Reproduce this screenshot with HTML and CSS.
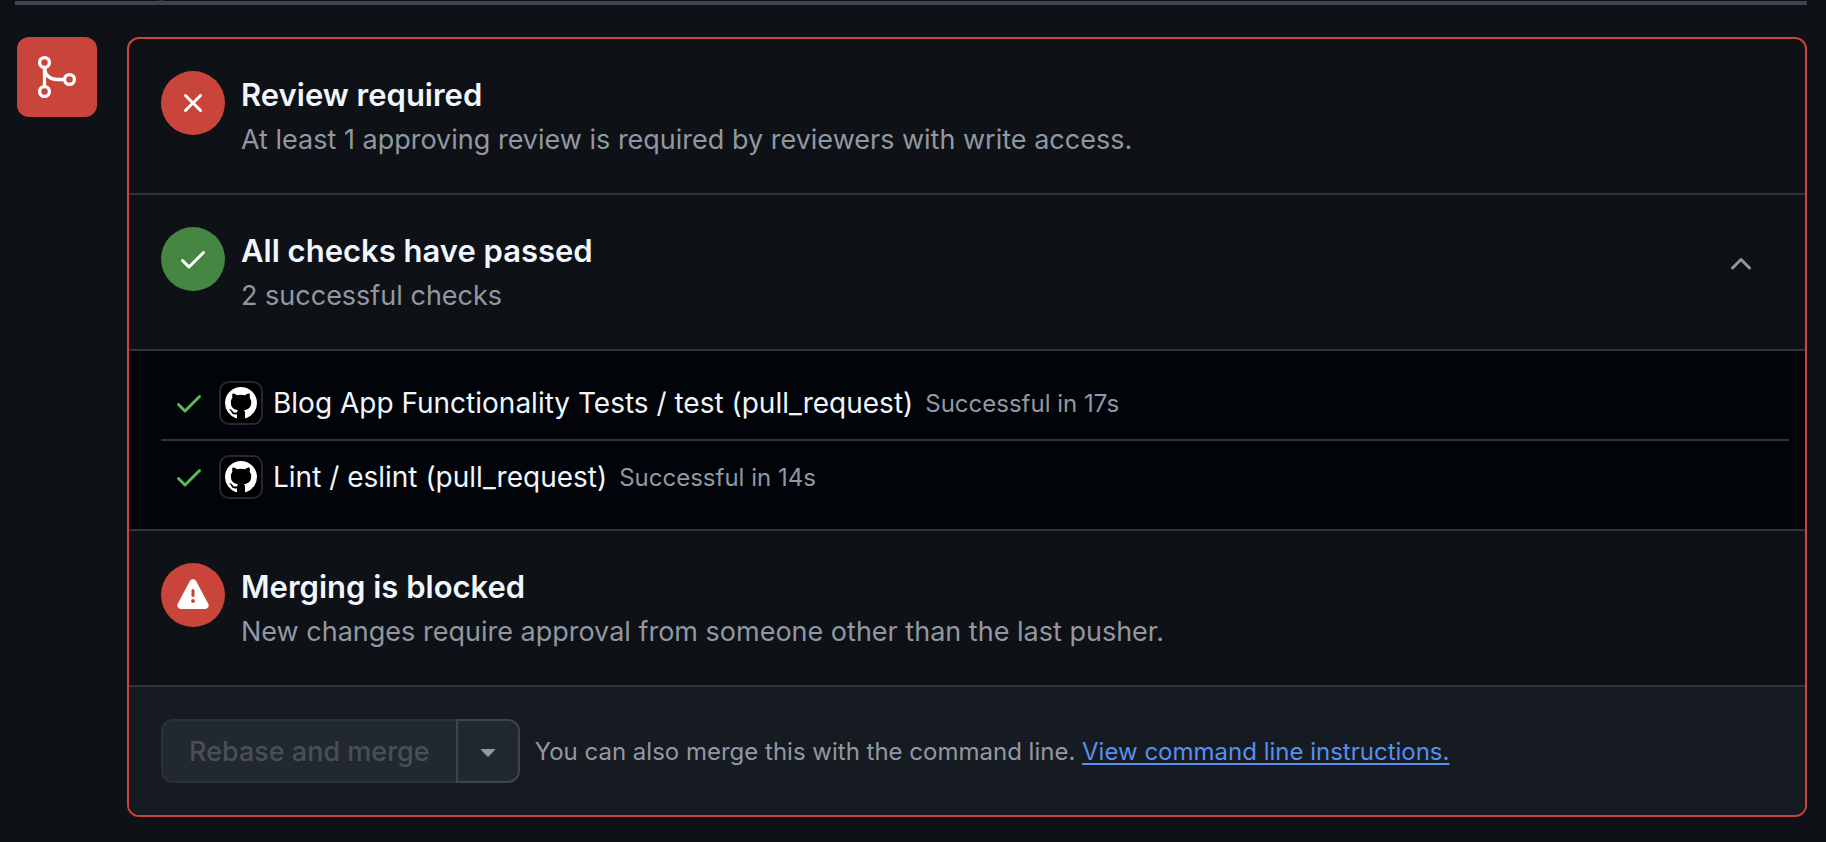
FILE: index.html
```html
<!DOCTYPE html>
<html lang="en">
<head>
<meta charset="utf-8">
<title>Merge status</title>
<link rel="stylesheet" href="styles.css">
</head>
<body>
<svg class="sprite" aria-hidden="true">
  <symbol id="check" viewBox="0 0 16 16"><path d="M13.78 4.22a.75.75 0 0 1 0 1.06l-7.25 7.25a.75.75 0 0 1-1.06 0L2.22 9.28a.751.751 0 0 1 .018-1.042.751.751 0 0 1 1.042-.018L6 10.94l6.72-6.72a.75.75 0 0 1 1.06 0Z"/></symbol>
  <symbol id="mark" viewBox="0 0 16 16"><path d="M8 0c4.42 0 8 3.58 8 8a8.013 8.013 0 0 1-5.45 7.59c-.4.08-.55-.17-.55-.38 0-.27.01-1.13.01-2.2 0-.75-.25-1.23-.54-1.48 1.78-.2 3.65-.88 3.65-3.95 0-.88-.31-1.59-.82-2.15.08-.2.36-1.02-.08-2.12 0 0-.67-.22-2.2.82-.64-.18-1.32-.27-2-.27-.68 0-1.36.09-2 .27-1.53-1.03-2.2-.82-2.2-.82-.44 1.1-.16 1.92-.08 2.12-.51.56-.82 1.28-.82 2.15 0 3.06 1.86 3.75 3.64 3.95-.23.2-.44.55-.51 1.07-.46.21-1.61.55-2.33-.66-.15-.24-.6-.83-1.23-.82-.67.01-.27.38.01.53.34.19.73.9.82 1.13.16.45.68 1.31 2.69.94 0 .67.01 1.3.01 1.49 0 .21-.15.45-.55.38A7.995 7.995 0 0 1 0 8c0-4.42 3.58-8 8-8Z"/></symbol>
</svg>
<div class="timeline-line"></div>
<div class="timeline-end"></div>
<main class="merge">
  <div class="merge-badge">
    <svg class="icon-lg" viewBox="0 0 24 24" fill="none" stroke="currentColor" stroke-width="1.65" aria-hidden="true"><circle cx="5.75" cy="4.75" r="2.45"/><circle cx="5.75" cy="19.25" r="2.45"/><circle cx="18.25" cy="13.25" r="2.45"/><path d="M5.75 7.25v9.5M5.75 7.5c.3 3.6 2.7 5.75 6.25 5.75h3.75"/></svg>
  </div>
  <div class="panel">
    <section class="section">
      <span class="status status-red"><svg class="icon" viewBox="0 0 16 16" aria-hidden="true"><path d="M3.72 3.72a.75.75 0 0 1 1.06 0L8 6.94l3.22-3.22a.749.749 0 0 1 1.275.326.749.749 0 0 1-.215.734L9.06 8l3.22 3.22a.749.749 0 0 1-.326 1.275.749.749 0 0 1-.734-.215L8 9.06l-3.22 3.22a.751.751 0 0 1-1.042-.018.751.751 0 0 1-.018-1.042L6.94 8 3.72 4.78a.75.75 0 0 1 0-1.06Z"/></svg></span>
      <div class="copy">
        <h2 class="title">Review required</h2>
        <p class="desc">At least 1 approving review is required by reviewers with write access.</p>
      </div>
    </section>
    <section class="section">
      <span class="status status-green"><svg class="icon" aria-hidden="true"><use href="#check"/></svg></span>
      <div class="copy">
        <h2 class="title">All checks have passed</h2>
        <p class="desc">2 successful checks</p>
      </div>
      <button class="toggle" type="button" aria-label="Collapse checks" aria-expanded="true"><svg class="icon" viewBox="0 0 16 16" aria-hidden="true"><path d="M3.22 10.53a.749.749 0 0 1 0-1.06l4.25-4.25a.749.749 0 0 1 1.06 0l4.25 4.25a.749.749 0 1 1-1.06 1.06L8 6.811 4.28 10.53a.749.749 0 0 1-1.06 0Z"/></svg></button>
    </section>
    <ul class="checks">
      <li class="check">
        <svg class="icon check-icon" aria-hidden="true"><use href="#check"/></svg>
        <span class="avatar"><svg class="icon" aria-hidden="true"><use href="#mark"/></svg></span>
        <span class="check-name">Blog App Functionality Tests / test (pull_request)</span>
        <span class="check-time">Successful in 17s</span>
      </li>
      <li class="check">
        <svg class="icon check-icon" aria-hidden="true"><use href="#check"/></svg>
        <span class="avatar"><svg class="icon" aria-hidden="true"><use href="#mark"/></svg></span>
        <span class="check-name">Lint / eslint (pull_request)</span>
        <span class="check-time">Successful in 14s</span>
      </li>
    </ul>
    <section class="section">
      <span class="status status-red"><svg class="icon" viewBox="0 0 16 16" aria-hidden="true"><path d="M6.457 1.047c.659-1.234 2.427-1.234 3.086 0l6.082 11.378A1.75 1.75 0 0 1 14.082 15H1.918a1.75 1.75 0 0 1-1.543-2.575ZM8 5a.75.75 0 0 0-.75.75v2.5a.75.75 0 0 0 1.5 0v-2.5A.75.75 0 0 0 8 5Zm1 6a1 1 0 1 0-2 0 1 1 0 0 0 2 0Z"/></svg></span>
      <div class="copy">
        <h2 class="title">Merging is blocked</h2>
        <p class="desc">New changes require approval from someone other than the last pusher.</p>
      </div>
    </section>
    <footer class="actions">
      <div class="button-group">
        <button class="merge-button" type="button" disabled>Rebase and merge</button>
        <button class="menu-button" type="button" aria-label="Select merge method"><svg class="icon" viewBox="0 0 16 16" aria-hidden="true"><path d="m4.427 7.427 3.396 3.396a.25.25 0 0 0 .354 0l3.396-3.396A.25.25 0 0 0 11.396 7H4.604a.25.25 0 0 0-.177.427Z"/></svg></button>
      </div>
      <p class="hint">You can also merge this with the command line. <a class="link" href="#">View command line instructions.</a></p>
    </footer>
  </div>
</main>
</body>
</html>
```
FILE: styles.css
```css
* {
  box-sizing: border-box;
}

body {
  margin: 0;
  padding: 0 19px 24px 15px;
  background: #0e1116;
  color: #f0f6fc;
  font-family: Inter, "Liberation Sans", sans-serif;
  font-size: 27px;
}

h2,
p,
ul {
  margin: 0;
  padding: 0;
}

button {
  margin: 0;
  padding: 0;
  font: inherit;
}

svg {
  display: block;
  fill: currentColor;
}

.sprite {
  position: absolute;
  width: 0;
  height: 0;
}

.timeline-line {
  width: 4px;
  height: 1px;
  margin-left: 144px;
  background: #2f353d;
}

.timeline-end {
  height: 4px;
  background: #3d444d;
}

.merge {
  display: flex;
  align-items: flex-start;
  gap: 30px;
  padding: 32px 0 0 2px;
}

.merge-badge {
  display: grid;
  flex: none;
  place-items: center;
  width: 80px;
  height: 80px;
  border-radius: 12px;
  background: #c9453b;
  color: #fff;
}

.icon {
  flex: none;
  width: 32px;
  height: 32px;
}

.icon-lg {
  width: 48px;
  height: 48px;
  fill: none;
}

.panel {
  flex: 1;
  min-width: 0;
  overflow: hidden;
  border: 2px solid #c9453b;
  border-radius: 12px;
}

.section {
  display: flex;
  align-items: flex-start;
  gap: 16px;
  padding: 32px;
  border-bottom: 2px solid #2f353d;
}

.status {
  display: grid;
  flex: none;
  place-items: center;
  width: 64px;
  height: 64px;
  border-radius: 50%;
  color: #fff;
}

.status-red {
  background: #c9453b;
}

.status-green {
  background: #448642;
}

.copy {
  flex: 1;
}

.title {
  font-size: 31px;
  font-weight: 600;
  line-height: 48px;
}

.desc {
  color: #9198a1;
  line-height: 42px;
}

.toggle {
  display: grid;
  place-items: center;
  width: 64px;
  height: 74px;
  border: 0;
  background: none;
  color: #9198a1;
}

.checks {
  padding: 16px 16px 16px 32px;
  border-bottom: 2px solid #2f353d;
  background: #010409;
  list-style: none;
}

.check {
  display: flex;
  align-items: center;
  height: 72px;
  padding-left: 12px;
}

.check + .check {
  height: 74px;
  border-top: 2px solid #2f353d;
}

.check-icon {
  color: #5cb85a;
}

.avatar {
  display: grid;
  place-items: center;
  width: 44px;
  height: 44px;
  margin: 0 10px 0 14px;
  border: 2px solid #26282c;
  border-radius: 10px;
  background: #000;
  color: #fff;
}

.check-name {
  font-size: 28px;
}

.check-time {
  margin-left: 12px;
  color: #9198a1;
  font-size: 24px;
}

.actions {
  display: flex;
  align-items: center;
  gap: 15px;
  padding: 32px;
  background: #161b22;
}

.button-group {
  display: flex;
  height: 64px;
}

.merge-button {
  padding: 0 26px;
  border: 2px solid #2a3038;
  border-right: 0;
  border-radius: 12px 0 0 12px;
  background: #212830;
  color: #484f58;
  font-weight: 500;
}

.menu-button {
  display: grid;
  place-items: center;
  width: 64px;
  border: 2px solid #3d444d;
  border-radius: 0 12px 12px 0;
  background: #212830;
  color: #9198a1;
}

.hint {
  color: #9198a1;
  font-size: 24px;
}

.link {
  color: #588ff0;
  text-decoration-thickness: 2px;
  text-underline-offset: 3px;
}
```
